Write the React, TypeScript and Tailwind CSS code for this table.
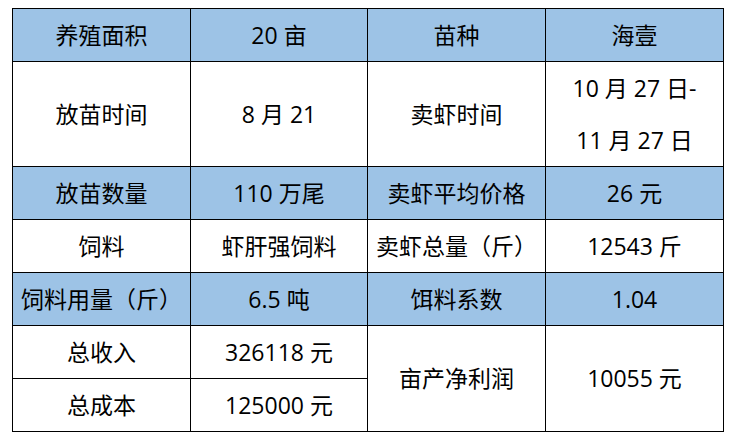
const rows: { blue: boolean; cells: string[] }[] = [
  { blue: true, cells: ["养殖面积", "20 亩", "苗种", "海壹"] },
  { blue: false, cells: ["放苗时间", "8 月 21", "卖虾时间", "__dates__"] },
  { blue: true, cells: ["放苗数量", "110 万尾", "卖虾平均价格", "26 元"] },
  { blue: false, cells: ["饲料", "虾肝强饲料", "卖虾总量（斤）", "12543 斤"] },
  { blue: true, cells: ["饲料用量（斤）", "6.5 吨", "饵料系数", "1.04"] },
];

const cell = "border border-black text-center align-middle p-0 whitespace-nowrap";

export default function App() {
  return (
    <div
      className="w-[730px] h-[437px] bg-white pt-[8px] pl-[12px]"
      style={{ fontFamily: '"Open Sans", "Noto Sans CJK SC", sans-serif' }}
    >
      <table className="border-collapse table-fixed w-[711px] text-[23px] text-black">
        <colgroup>
          <col className="w-[178px]" />
          <col className="w-[177px]" />
          <col className="w-[178px]" />
          <col className="w-[178px]" />
        </colgroup>
        <tbody>
          {rows.map((r, i) => (
            <tr key={i} className={`${i === 1 ? "h-[105px]" : "h-[53px]"} ${r.blue ? "bg-[#9dc3e6]" : "bg-white"}`}>
              {r.cells.map((c, j) => (
                <td key={j} className={cell}>
                  {c === "__dates__" ? (
                    <div className="leading-[52px]">
                      <div>10 月 27 日-</div>
                      <div>11 月 27 日</div>
                    </div>
                  ) : (
                    c
                  )}
                </td>
              ))}
            </tr>
          ))}
          <tr className="h-[53px]">
            <td className={cell}>总收入</td>
            <td className={cell}>326118 元</td>
            <td className={cell} rowSpan={2}>亩产净利润</td>
            <td className={cell} rowSpan={2}>10055 元</td>
          </tr>
          <tr className="h-[53px]">
            <td className={cell}>总成本</td>
            <td className={cell}>125000 元</td>
          </tr>
        </tbody>
      </table>
    </div>
  );
}
